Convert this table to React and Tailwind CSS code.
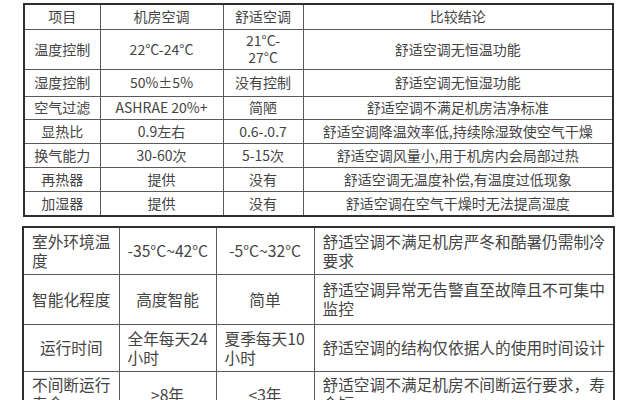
const topRows = [
  { h: 'h-[25px]', cells: ['项目', '机房空调', '舒适空调', '比较结论'] },
  { h: 'h-[40px]', cells: ['温度控制', '22°C-24°C', '21°C-\n27°C', '舒适空调无恒温功能'] },
  { h: 'h-[27px]', cells: ['湿度控制', '50%±5%', '没有控制', '舒适空调无恒湿功能'] },
  { h: 'h-[23px]', cells: ['空气过滤', 'ASHRAE 20%+', '简陋', '舒适空调不满足机房洁净标准'] },
  { h: 'h-[24px]', cells: ['显热比', '0.9左右', '0.6-.0.7', '舒适空调降温效率低,持续除湿致使空气干燥'] },
  { h: 'h-[24px]', cells: ['换气能力', '30-60次', '5-15次', '舒适空调风量小,用于机房内会局部过热'] },
  { h: 'h-[24px]', cells: ['再热器', '提供', '没有', '舒适空调无温度补偿,有温度过低现象'] },
  { h: 'h-[25px]', cells: ['加湿器', '提供', '没有', '舒适空调在空气干燥时无法提高湿度'] },
];

const bottomRows = [
  {
    h: 'h-[47px]',
    cells: [
      { t: '室外环境温\n度', a: 'text-left' },
      { t: '-35°C~42°C', a: 'text-center' },
      { t: '-5°C~32°C', a: 'text-center' },
      { t: '舒适空调不满足机房严冬和酷暑仍需制冷\n要求', a: 'text-left' },
    ],
  },
  {
    h: 'h-[50px]',
    cells: [
      { t: '智能化程度', a: 'text-center' },
      { t: '高度智能', a: 'text-center' },
      { t: '简单', a: 'text-center' },
      { t: '舒适空调异常无告警直至故障且不可集中\n监控', a: 'text-left' },
    ],
  },
  {
    h: 'h-[47px]',
    cells: [
      { t: '运行时间', a: 'text-center' },
      { t: '全年每天24\n小时', a: 'text-left' },
      { t: '夏季每天10\n小时', a: 'text-left' },
      { t: '舒适空调的结构仅依据人的使用时间设计', a: 'text-left' },
    ],
  },
  {
    h: 'h-[47px]',
    cells: [
      { t: '不间断运行\n寿命', a: 'text-left' },
      { t: '>8年', a: 'text-center' },
      { t: '<3年', a: 'text-center' },
      { t: '舒适空调不满足机房不间断运行要求，寿\n命短', a: 'text-left' },
    ],
  },
];

const topWidths = ['w-[76px]', 'w-[123px]', 'w-[80px]', 'w-[310px]'];
const bottomWidths = ['w-[96px]', 'w-[97px]', 'w-[98px]', 'w-[300px]'];

const font = { fontFamily: '"Noto Sans CJK SC", "Liberation Sans", sans-serif' };

const App = () => {
  return (
    <div className="w-[625px] h-[400px] overflow-hidden bg-white text-[#444]" style={font}>
      {/* Upper comparison table */}
      <div className="pl-[23px] pt-[3px]">
        <table className="table-fixed border-collapse border-2 border-[#2e2e2e] w-[589px] text-[14px] leading-[17px]">
          <colgroup>
            {topWidths.map((w, i) => (
              <col key={i} className={w} />
            ))}
          </colgroup>
          <tbody>
            {topRows.map((row, r) => (
              <tr key={r} className={row.h}>
                {row.cells.map((c, i) => (
                  <td
                    key={i}
                    className="border border-[#5a5a5a] text-center align-middle p-0 whitespace-pre"
                  >
                    {c}
                  </td>
                ))}
              </tr>
            ))}
          </tbody>
        </table>
      </div>

      {/* Lower comparison table */}
      <div className="pl-[22px] pt-[9px]">
        <table className="table-fixed border-collapse border-2 border-[#2e2e2e] w-[591px] text-[15.7px] leading-[19px]">
          <colgroup>
            {bottomWidths.map((w, i) => (
              <col key={i} className={w} />
            ))}
          </colgroup>
          <tbody>
            {bottomRows.map((row, r) => (
              <tr key={r} className={row.h}>
                {row.cells.map((c, i) => (
                  <td
                    key={i}
                    className={`border border-[#5a5a5a] align-middle px-[8px] py-0 whitespace-pre ${c.a}`}
                  >
                    {c.t}
                  </td>
                ))}
              </tr>
            ))}
          </tbody>
        </table>
      </div>
    </div>
  );
};

export default App;
